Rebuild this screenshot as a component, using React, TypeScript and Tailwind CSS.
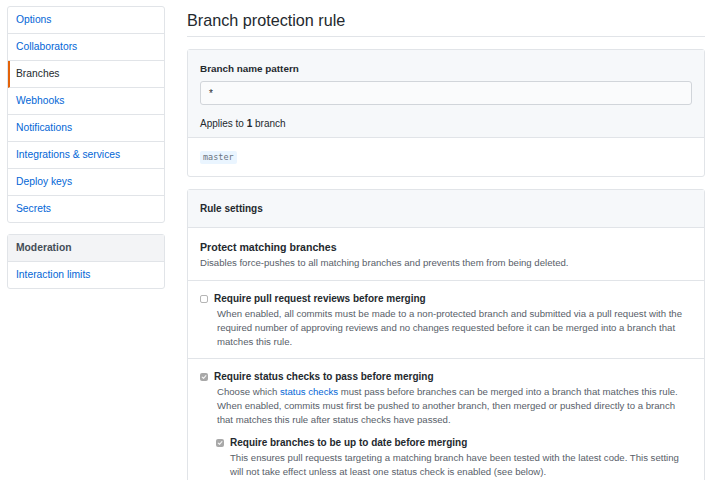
import React from "react";

const font = { fontFamily: '"Liberation Sans", Arial, sans-serif' };

function Check({ checked }: { checked: boolean }) {
  if (!checked) {
    return <span className="inline-block w-[8px] h-[8px] rounded-[2px] border border-[#b5b5b5] bg-white shrink-0" />;
  }
  return (
    <span className="inline-flex items-center justify-center w-[8px] h-[8px] rounded-[2px] bg-[#a8a8a8] shrink-0">
      <svg width="6" height="6" viewBox="0 0 10 10">
        <path d="M2 5.2 L4.2 7.4 L8.2 2.6" fill="none" stroke="#f4f4f4" strokeWidth="1.8" strokeLinecap="round" strokeLinejoin="round" />
      </svg>
    </span>
  );
}

const navItems = [
  "Options",
  "Collaborators",
  "Branches",
  "Webhooks",
  "Notifications",
  "Integrations & services",
  "Deploy keys",
  "Secrets",
];

export default function App() {
  return (
    <div className="w-[715px] h-[480px] overflow-hidden bg-white flex items-start pl-[7px] pt-[6px]" style={font}>
      <div className="w-[158px] shrink-0 flex flex-col gap-[11px]">
        <div className="border border-[#e1e4e8] rounded-[3px] flex flex-col">
          {navItems.map((n, i) => (
            <div
              key={n}
              className={`h-[26px] shrink-0 flex items-center text-[10.3px] ${i < navItems.length - 1 ? "box-content border-b border-[#e1e4e8]" : ""} ${n === "Branches" ? "border-l-2 border-l-[#e36209] pl-[6px] text-[#24292e]" : "pl-[8px] text-[#0366d6]"}`}
            >
              {n}
            </div>
          ))}
        </div>
        <div className="border border-[#e1e4e8] rounded-[3px] flex flex-col">
          <div className="h-[26px] shrink-0 box-content border-b border-[#e1e4e8] bg-[#f3f4f6] flex items-center pl-[8px] text-[10.3px] font-bold text-[#444d56]">
            Moderation
          </div>
          <div className="h-[26px] shrink-0 flex items-center pl-[8px] text-[10.3px] text-[#0366d6]">Interaction limits</div>
        </div>
      </div>

      <div className="ml-[22px] w-[518px] shrink-0 flex flex-col">
        <div className="h-[31px] shrink-0 border-b border-[#e1e4e8] flex items-center text-[16.2px] text-[#24292e] leading-none pb-[2px]">
          Branch protection rule
        </div>

        <div className="mt-[12px] shrink-0 border border-[#e1e4e8] rounded-[3px]">
          <div className="bg-[#f6f8fa] px-[12px] pt-[12px] pb-[6px] border-b border-[#e1e4e8]">
            <div className="text-[9.9px] font-bold leading-[14px] text-[#24292e]">Branch name pattern</div>
            <div className="mt-[5px] h-[24px] border border-[#d1d5da] rounded-[3px] bg-[#fafbfc] flex items-center pl-[8px] text-[10px] text-[#24292e]">
              *
            </div>
            <div className="mt-[12px] text-[10px] leading-[14px] text-[#24292e]">
              Applies to <b>1</b> branch
            </div>
          </div>
          <div className="h-[38px] flex items-center px-[12px]">
            <span
              className="bg-[#eaf5ff] text-[#6a737d] rounded-[2px] px-[3px] h-[13px] flex items-center text-[8.5px]"
              style={{ fontFamily: '"DejaVu Sans Mono", "Liberation Mono", monospace' }}
            >
              master
            </span>
          </div>
        </div>

        <div className="mt-[12px] shrink-0 border border-[#e1e4e8] rounded-[3px] flex flex-col">
          <div className="h-[38px] shrink-0 bg-[#f6f8fa] border-b border-[#e1e4e8] flex items-center px-[12px] text-[10px] font-bold text-[#24292e]">
            Rule settings
          </div>
          <div className="px-[12px] pt-[12px] pb-[10px] border-b border-[#e1e4e8]">
            <div className="text-[10.6px] font-bold leading-[14px] text-[#24292e]">Protect matching branches</div>
            <div className="mt-[2px] text-[9.6px] leading-[14px] text-[#586069]">
              Disables force-pushes to all matching branches and prevents them from being deleted.
            </div>
          </div>
          <div className="px-[12px] pt-[11px] pb-[9px] border-b border-[#e1e4e8]">
            <div className="flex items-center gap-[6px]">
              <Check checked={false} />
              <div className="text-[10px] font-bold leading-[14px] text-[#24292e]">Require pull request reviews before merging</div>
            </div>
            <div className="mt-px pl-[17px] text-[9.6px] leading-[14px] text-[#586069]">
              When enabled, all commits must be made to a non-protected branch and submitted via a pull request with the required number of approving reviews and no changes requested before it can be merged into a branch that matches this rule.
            </div>
          </div>
          <div className="px-[12px] pt-[11px] pb-[12px]">
            <div className="flex items-center gap-[6px]">
              <Check checked={true} />
              <div className="text-[10px] font-bold leading-[14px] text-[#24292e]">Require status checks to pass before merging</div>
            </div>
            <div className="mt-px pl-[17px] text-[9.6px] leading-[14px] text-[#586069]">
              Choose which <span className="text-[#0366d6]">status checks</span> must pass before branches can be merged into a branch that matches this rule. When enabled, commits must first be pushed to another branch, then merged or pushed directly to a branch that matches this rule after status checks have passed.
            </div>
            <div className="mt-[9px] pl-[16px]">
              <div className="flex items-center gap-[6px]">
                <Check checked={true} />
                <div className="text-[10px] font-bold leading-[14px] text-[#24292e]">Require branches to be up to date before merging</div>
              </div>
              <div className="mt-px pl-[14px] text-[9.6px] leading-[14px] text-[#586069]">
                This ensures pull requests targeting a matching branch have been tested with the latest code. This setting will not take effect unless at least one status check is enabled (see below).
              </div>
            </div>
          </div>
        </div>
      </div>
    </div>
  );
}
